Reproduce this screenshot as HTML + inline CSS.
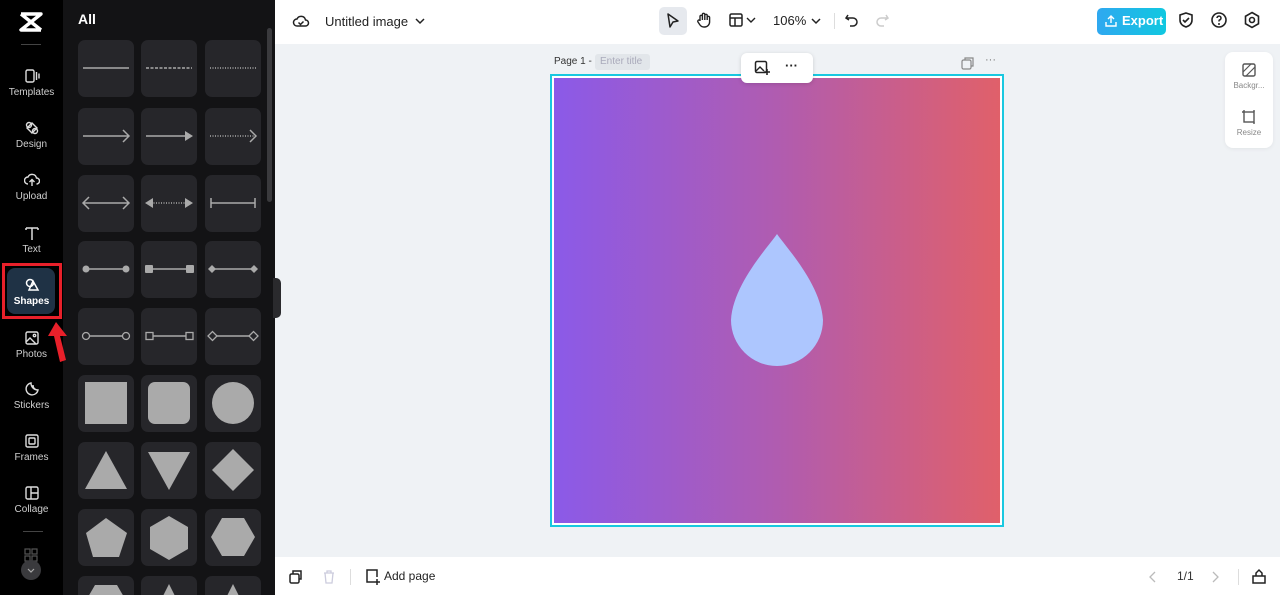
<!DOCTYPE html>
<html><head><meta charset="utf-8"><style>
*{margin:0;padding:0;box-sizing:border-box}
html,body{width:1280px;height:595px;overflow:hidden}
body{font-family:"Liberation Sans",sans-serif;background:#eff2f5}
#w{position:relative;width:1280px;height:595px;overflow:hidden;background:#eff2f5}
.a{position:absolute}
.rail{left:0;top:0;width:63px;height:595px;background:#000}
.panel{left:63px;top:0;width:212px;height:595px;background:#131315}
.nav{position:absolute;left:0;width:63px;text-align:center;color:#cfcfcf;font-size:10px}
.nav svg{display:block;margin:0 auto 3px}
.tile{position:absolute;width:56px;height:57px;background:#26262a;border-radius:7px;overflow:hidden}
.tile svg{width:56px;height:57px;display:block}
.last{height:19px;border-radius:7px 7px 0 0}
.top{left:275px;top:0;width:1005px;height:44px;background:#fff}
.bot{left:275px;top:557px;width:1005px;height:38px;background:#fff}
</style></head><body><div id="w">
<div class="a rail"></div>
<div class="a panel"></div>
<svg class="a" style="left:18px;top:11px" width="26" height="22" viewBox="0 0 26 22"><path d="M3 3h20L3 19h20M3 3l20 16" stroke="#fff" stroke-width="3.4" fill="none" stroke-linejoin="round"/></svg>
<div class="a" style="left:21px;top:44px;width:20px;height:1px;background:#444"></div>
<div class="nav" style="top:68px"><svg width="16" height="16" viewBox="0 0 16 16" fill="none" stroke="#ddd" stroke-width="1.4"><rect x="2" y="2" width="8" height="12" rx="1.5"/><path d="M12.5 4v8M15 5.5v5"/></svg>Templates</div>
<div class="nav" style="top:120px"><svg width="16" height="16" viewBox="0 0 16 16" fill="none" stroke="#ddd" stroke-width="1.4"><circle cx="5" cy="5" r="2.5"/><path d="M8 3l5 5-5 5-5-5z"/><circle cx="11" cy="11" r="2.5"/></svg>Design</div>
<div class="nav" style="top:172px"><svg width="16" height="16" viewBox="0 0 16 16" fill="none" stroke="#ddd" stroke-width="1.4"><path d="M4 12a3.5 3.5 0 0 1 0-7 4.5 4.5 0 0 1 8.5 1 3 3 0 0 1 0 6M8 14V8m-2.5 2L8 7.5 10.5 10"/></svg>Upload</div>
<div class="nav" style="top:225px"><svg width="16" height="16" viewBox="0 0 16 16" fill="none" stroke="#ddd" stroke-width="1.5"><path d="M2 3h12M8 3v12M2 3v2M14 3v2"/></svg>Text</div>
<div class="a" style="left:2px;top:263px;width:60px;height:56px;border:3px solid #e8202a"></div>
<div class="a" style="left:7px;top:268px;width:48px;height:46px;background:#1f3245;border-radius:8px"></div>
<div class="nav" style="top:277px;color:#fff;font-weight:bold"><svg width="16" height="16" viewBox="0 0 16 16" fill="none" stroke="#fff" stroke-width="1.5"><circle cx="6" cy="6" r="3.5"/><path d="M9 4l5 9H5z"/></svg>Shapes</div>
<svg class="a" style="left:48px;top:322px" width="22" height="42" viewBox="0 0 22 42"><path d="M8 0L0 14h6l6 26 6-2-6-24h7z" fill="#e8202a"/></svg>
<div class="nav" style="top:330px"><svg width="16" height="16" viewBox="0 0 16 16" fill="none" stroke="#ddd" stroke-width="1.4"><rect x="2" y="2" width="12" height="12" rx="1.5"/><path d="M2 12l4-4 6 6"/><circle cx="10.5" cy="5.5" r="1.2"/></svg>Photos</div>
<div class="nav" style="top:381px"><svg width="16" height="16" viewBox="0 0 16 16" fill="none" stroke="#ddd" stroke-width="1.4"><path d="M14 9a6 6 0 1 1-7-7c0 4 3 7 7 7zM14 9c-3 0-5-2-5-5"/></svg>Stickers</div>
<div class="nav" style="top:433px"><svg width="16" height="16" viewBox="0 0 16 16" fill="none" stroke="#ddd" stroke-width="1.4"><rect x="2" y="2" width="12" height="12" rx="1.5"/><rect x="5" y="5" width="6" height="6" rx="1"/></svg>Frames</div>
<div class="nav" style="top:485px"><svg width="16" height="16" viewBox="0 0 16 16" fill="none" stroke="#ddd" stroke-width="1.4"><rect x="2" y="2" width="12" height="12" rx="1.5"/><path d="M7 2v12M7 8h7"/></svg>Collage</div>
<div class="a" style="left:23px;top:531px;width:20px;height:1px;background:#444"></div>
<svg class="a" style="left:24px;top:548px" width="14" height="14"><g fill="none" stroke="#555" stroke-width="1.2"><rect x="1" y="1" width="5" height="5"/><rect x="8" y="1" width="5" height="5"/><rect x="1" y="8" width="5" height="5"/><rect x="8" y="8" width="5" height="5"/></g></svg>
<div class="a" style="left:21px;top:560px;width:20px;height:20px;border-radius:50%;background:#3a3a3d"></div>
<svg class="a" style="left:26px;top:565px" width="10" height="10"><path d="M2 4l3 3 3-3" stroke="#aaa" fill="none" stroke-width="1.2"/></svg>

<div class="a" style="left:78px;top:11px;color:#fff;font-weight:bold;font-size:14px">All</div>
<div class="a" style="left:267px;top:28px;width:5px;height:174px;background:#3a3a3d;border-radius:3px"></div>

<div class="tile" style="left:78px;top:40px"><svg><path d="M5 28h46" stroke="#aaa" stroke-width="1.5"/></svg></div>
<div class="tile" style="left:141px;top:40px"><svg><path d="M5 28h46" stroke="#aaa" stroke-width="1.5" stroke-dasharray="3 1.5"/></svg></div>
<div class="tile" style="left:205px;top:40px"><svg><path d="M5 28h46" stroke="#aaa" stroke-width="1.5" stroke-dasharray="1 1.5"/></svg></div>

<div class="tile" style="left:78px;top:108px"><svg><path d="M5 28h46M45 22l6 6-6 6" stroke="#aaa" stroke-width="1.5" fill="none"/></svg></div>
<div class="tile" style="left:141px;top:108px"><svg><path d="M5 28h40" stroke="#aaa" stroke-width="1.5"/><path d="M44 23l8 5-8 5z" fill="#aaa"/></svg></div>
<div class="tile" style="left:205px;top:108px"><svg><path d="M5 28h46" stroke="#aaa" stroke-width="1.5" stroke-dasharray="1 1.5"/><path d="M45 22l6 6-6 6" stroke="#aaa" stroke-width="1.5" fill="none"/></svg></div>

<div class="tile" style="left:78px;top:175px"><svg><path d="M5 28h46M45 22l6 6-6 6M11 22l-6 6 6 6" stroke="#aaa" stroke-width="1.5" fill="none"/></svg></div>
<div class="tile" style="left:141px;top:175px"><svg><path d="M10 28h36" stroke="#aaa" stroke-width="1.5" stroke-dasharray="1 1.5"/><path d="M44 23l8 5-8 5zM12 23l-8 5 8 5z" fill="#aaa"/></svg></div>
<div class="tile" style="left:205px;top:175px"><svg><path d="M6 28h44M6 23v10M50 23v10" stroke="#aaa" stroke-width="1.5" fill="none"/></svg></div>

<div class="tile" style="left:78px;top:241px"><svg><path d="M8 28h40" stroke="#aaa" stroke-width="1.5"/><circle cx="8" cy="28" r="3.5" fill="#aaa"/><circle cx="48" cy="28" r="3.5" fill="#aaa"/></svg></div>
<div class="tile" style="left:141px;top:241px"><svg><path d="M8 28h40" stroke="#aaa" stroke-width="1.5"/><rect x="4" y="24" width="8" height="8" fill="#aaa" rx="1"/><rect x="45" y="24" width="8" height="8" fill="#aaa" rx="1"/></svg></div>
<div class="tile" style="left:205px;top:241px"><svg><path d="M8 28h40" stroke="#aaa" stroke-width="1.5"/><path d="M3 28l4-4 4 4-4 4zM45 28l4-4 4 4-4 4z" fill="#aaa"/></svg></div>

<div class="tile" style="left:78px;top:308px"><svg><path d="M11 28h34" stroke="#aaa" stroke-width="1.5"/><circle cx="8" cy="28" r="3.5" fill="none" stroke="#aaa" stroke-width="1.3"/><circle cx="48" cy="28" r="3.5" fill="none" stroke="#aaa" stroke-width="1.3"/></svg></div>
<div class="tile" style="left:141px;top:308px"><svg><path d="M12 28h33" stroke="#aaa" stroke-width="1.5"/><rect x="5" y="24.5" width="7" height="7" fill="none" stroke="#aaa" stroke-width="1.3"/><rect x="45" y="24.5" width="7" height="7" fill="none" stroke="#aaa" stroke-width="1.3"/></svg></div>
<div class="tile" style="left:205px;top:308px"><svg><path d="M12 28h32" stroke="#aaa" stroke-width="1.5"/><path d="M3 28l4.5-4.5 4.5 4.5-4.5 4.5zM44 28l4.5-4.5 4.5 4.5-4.5 4.5z" fill="none" stroke="#aaa" stroke-width="1.3"/></svg></div>

<div class="tile" style="left:78px;top:375px"><svg><rect x="7" y="7" width="42" height="42" fill="#aaa"/></svg></div>
<div class="tile" style="left:141px;top:375px"><svg><rect x="7" y="7" width="42" height="42" rx="7" fill="#aaa"/></svg></div>
<div class="tile" style="left:205px;top:375px"><svg><circle cx="28" cy="28" r="21" fill="#aaa"/></svg></div>

<div class="tile" style="left:78px;top:442px"><svg><path d="M28 9l21 38H7z" fill="#aaa"/></svg></div>
<div class="tile" style="left:141px;top:442px"><svg><path d="M7 10h42L28 48z" fill="#aaa"/></svg></div>
<div class="tile" style="left:205px;top:442px"><svg><path d="M28 7l21 21-21 21L7 28z" fill="#aaa"/></svg></div>

<div class="tile" style="left:78px;top:509px"><svg><path d="M28 9l21 15-8 24H15L8 24z" fill="#aaa"/></svg></div>
<div class="tile" style="left:141px;top:509px"><svg><path d="M28 7l19 11v22L28 51 9 40V18z" fill="#aaa"/></svg></div>
<div class="tile" style="left:205px;top:509px"><svg><path d="M17 9h22l11 19-11 19H17L6 28z" fill="#aaa"/></svg></div>

<div class="tile last" style="left:78px;top:576px"><svg><path d="M17 9h22l11 19H6z" fill="#aaa"/></svg></div>
<div class="tile last" style="left:141px;top:576px"><svg><path d="M28 8l10 20H18z" fill="#aaa"/></svg></div>
<div class="tile last" style="left:205px;top:576px"><svg><path d="M28 8l10 20H18z" fill="#aaa"/></svg></div>

<div class="a" style="left:273px;top:278px;width:8px;height:40px;background:#2a2a2d;border-radius:0 5px 5px 0"></div>

<div class="a top"></div>
<svg class="a" style="left:292px;top:12px" width="18" height="18" viewBox="0 0 18 18" fill="none" stroke="#222" stroke-width="1.5"><path d="M5 14a3.5 3.5 0 0 1 0-7 4.5 4.5 0 0 1 8.5 1 3 3 0 0 1 0 6zM6.5 10.5l2 2 3-3"/></svg>
<div class="a" style="left:325px;top:14px;font-size:13px;color:#222">Untitled image</div>
<svg class="a" style="left:414px;top:16px" width="12" height="10"><path d="M2 3l4 4 4-4" stroke="#222" fill="none" stroke-width="1.5"/></svg>
<div class="a" style="left:659px;top:7px;width:28px;height:28px;background:#e6e9ee;border-radius:5px"></div>
<svg class="a" style="left:665px;top:12px" width="16" height="18"><path d="M3 2l10 7-5 1-3 5z" stroke="#222" fill="none" stroke-width="1.5" stroke-linejoin="round"/></svg>
<svg class="a" style="left:695px;top:11px" width="18" height="18" viewBox="0 0 18 18"><path d="M5 10V5.5a1.2 1.2 0 0 1 2.4 0V9V3.5a1.2 1.2 0 0 1 2.4 0V9V4.5a1.2 1.2 0 0 1 2.4 0V9V6.5a1.2 1.2 0 0 1 2.4 0V11a5 5 0 0 1-5 5H9a5 5 0 0 1-4-2l-2-3a1.2 1.2 0 0 1 2-1.5z" stroke="#222" fill="none" stroke-width="1.4"/></svg>
<svg class="a" style="left:728px;top:12px" width="16" height="16"><rect x="2" y="2" width="12" height="12" rx="1.5" stroke="#222" fill="none" stroke-width="1.5"/><path d="M2 6h12M7 6v8" stroke="#222" stroke-width="1.5"/></svg>
<svg class="a" style="left:746px;top:16px" width="10" height="8"><path d="M1 2l4 4 4-4" stroke="#222" fill="none" stroke-width="1.4"/></svg>
<div class="a" style="left:773px;top:13px;font-size:13px;color:#222">106%</div>
<svg class="a" style="left:810px;top:16px" width="12" height="10"><path d="M2 3l4 4 4-4" stroke="#222" fill="none" stroke-width="1.5"/></svg>
<div class="a" style="left:834px;top:13px;width:1px;height:16px;background:#ddd"></div>
<svg class="a" style="left:844px;top:12px" width="16" height="16"><path d="M4 3L2 6l3 2M2 6h7a4 4 0 0 1 0 8H6" stroke="#222" fill="none" stroke-width="1.5"/></svg>
<svg class="a" style="left:874px;top:12px" width="16" height="16"><path d="M12 3l2 3-3 2M14 6H7a4 4 0 0 0 0 8h3" stroke="#ccc" fill="none" stroke-width="1.5"/></svg>
<div class="a" style="left:1097px;top:8px;width:69px;height:27px;border-radius:5px;background:linear-gradient(90deg,#2fa8f0,#10c8e0)"></div>
<svg class="a" style="left:1104px;top:14px" width="14" height="14"><path d="M7 9V2M4 5l3-3 3 3M2 8v4h10V8" stroke="#fff" fill="none" stroke-width="1.4"/></svg>
<div class="a" style="left:1122px;top:13px;font-size:13px;color:#fff;font-weight:bold">Export</div>
<svg class="a" style="left:1177px;top:11px" width="18" height="18"><path d="M9 2l6 2v5c0 4-3 6-6 7-3-1-6-3-6-7V4z M6 9l2 2 4-4" stroke="#222" fill="none" stroke-width="1.6"/></svg>
<svg class="a" style="left:1210px;top:11px" width="18" height="18"><circle cx="9" cy="9" r="7" stroke="#222" fill="none" stroke-width="1.6"/><path d="M7 7a2 2 0 1 1 2.5 2c-.5.2-.5.8-.5 1.5" stroke="#222" fill="none" stroke-width="1.5"/><circle cx="9" cy="13" r="1" fill="#222"/></svg>
<svg class="a" style="left:1243px;top:11px" width="18" height="18"><path d="M9 1.5l6.5 3.75v7.5L9 16.5 2.5 12.75v-7.5z" stroke="#222" fill="none" stroke-width="1.6"/><circle cx="9" cy="9" r="2.5" stroke="#222" fill="none" stroke-width="1.6"/></svg>

<div class="a" style="left:554px;top:56px;font-size:10px;color:#333">Page 1 -</div>
<div class="a" style="left:595px;top:54px;width:55px;height:16px;background:#e2e6ea;border-radius:3px;font-size:10px;color:#aab;padding:2px 5px">Enter title</div>
<svg class="a" style="left:961px;top:56px" width="14" height="14"><rect x="1" y="4" width="9" height="9" rx="1.5" stroke="#888" fill="none" stroke-width="1.2"/><path d="M4 4V2h8v8h-2" stroke="#888" fill="none" stroke-width="1.2"/></svg>
<div class="a" style="left:985px;top:54px;font-size:11px;color:#777">···</div>
<div class="a" style="left:550px;top:74px;width:454px;height:453px;border:2px solid #19c8e0;background:#fff"></div>
<div class="a" style="left:554px;top:78px;width:446px;height:445px;background:linear-gradient(90deg,#8b5ae8,#b05cb0 50%,#e0606a)"></div>
<svg class="a" style="left:729px;top:232px" width="96" height="138" viewBox="0 0 96 138"><path d="M48 2C40 14 4 52 2 88a46 46 0 0 0 92 0C92 52 56 14 48 2z" fill="#adc6fe"/></svg>
<div class="a" style="left:741px;top:53px;width:72px;height:30px;background:#fff;border-radius:6px;box-shadow:0 1px 4px rgba(0,0,0,.15)"></div>
<svg class="a" style="left:754px;top:60px" width="16" height="16"><rect x="1.5" y="1.5" width="11" height="11" rx="1.5" stroke="#222" fill="none" stroke-width="1.5"/><path d="M2 11l4-4 4 4" stroke="#222" fill="none" stroke-width="1.4"/><path d="M13 9v6M10 12h6" stroke="#222" stroke-width="1.6"/></svg>
<div class="a" style="left:785px;top:58px;font-size:13px;color:#222;font-weight:bold">···</div>
<div class="a" style="left:1225px;top:52px;width:48px;height:96px;background:#fff;border-radius:8px;box-shadow:0 1px 4px rgba(0,0,0,.06)"></div>
<svg class="a" style="left:1241px;top:62px" width="16" height="16"><rect x="2" y="2" width="12" height="12" rx="1.5" stroke="#555" fill="none" stroke-width="1.4"/><path d="M2 10l8-8M5 14l9-9" stroke="#555" stroke-width="1.2"/></svg>
<div class="a" style="left:1225px;top:81px;width:48px;text-align:center;font-size:8px;color:#888">Backgr...</div>
<svg class="a" style="left:1241px;top:109px" width="16" height="16"><rect x="3" y="3" width="10" height="10" stroke="#555" fill="none" stroke-width="1.4"/><path d="M3 1v2M13 13v2M1 3h2M13 1v2" stroke="#555" stroke-width="1.4"/></svg>
<div class="a" style="left:1225px;top:128px;width:48px;text-align:center;font-size:8px;color:#888">Resize</div>

<div class="a bot"></div>
<svg class="a" style="left:288px;top:569px" width="16" height="16"><rect x="2" y="5" width="9" height="9" rx="1.5" stroke="#222" fill="none" stroke-width="1.5"/><path d="M5 5V2h8v8h-2" stroke="#222" fill="none" stroke-width="1.5"/></svg>
<svg class="a" style="left:321px;top:569px" width="16" height="16"><path d="M3 4h10M6 4V2h4v2M4 4l1 10h6l1-10" stroke="#ccd" fill="none" stroke-width="1.3"/></svg>
<div class="a" style="left:350px;top:569px;width:1px;height:16px;background:#ddd"></div>
<svg class="a" style="left:364px;top:568px" width="18" height="18"><path d="M10 14H3V2h10v7" stroke="#222" fill="none" stroke-width="1.5"/><path d="M13 11v6M10 14h6" stroke="#222" stroke-width="1.5"/></svg>
<div class="a" style="left:384px;top:569px;font-size:12px;color:#222">Add page</div>
<svg class="a" style="left:1148px;top:570px" width="10" height="14"><path d="M7 2L2 7l5 5" stroke="#bbb" fill="none" stroke-width="1.3"/></svg>
<div class="a" style="left:1177px;top:569px;font-size:12px;color:#333">1/1</div>
<svg class="a" style="left:1210px;top:570px" width="10" height="14"><path d="M3 2l5 5-5 5" stroke="#bbb" fill="none" stroke-width="1.3"/></svg>
<div class="a" style="left:1238px;top:569px;width:1px;height:16px;background:#ddd"></div>
<svg class="a" style="left:1251px;top:567px" width="16" height="18"><path d="M2 9h12v7H2zM5 9V6l3-3 3 3v3" stroke="#222" fill="none" stroke-width="1.5"/></svg>
</div></body></html>
